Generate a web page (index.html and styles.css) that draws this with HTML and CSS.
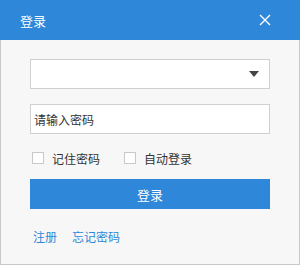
FILE: index.html
```html
<!DOCTYPE html>
<html>
<head>
<meta charset="utf-8">
<link rel="stylesheet" href="styles.css">
</head>
<body>
<div class="win">
  <div class="head">
    <span class="title">登录</span>
    <svg class="close" width="12" height="12" viewBox="0 0 12 12"><path d="M1 1L11 11M11 1L1 11" stroke="#fff" stroke-width="1.4"/></svg>
  </div>
  <div class="body">
    <div class="field select">
      <svg width="10" height="6" viewBox="0 0 10 6"><path d="M0 0H10L5 6Z" fill="#444"/></svg>
    </div>
    <div class="field input">请输入密码</div>
    <div class="checks">
      <label class="chk"><span class="box"></span>记住密码</label>
      <label class="chk"><span class="box"></span>自动登录</label>
    </div>
    <div class="btn">登录</div>
    <div class="links">
      <a>注册</a>
      <a>忘记密码</a>
    </div>
  </div>
</div>
</body>
</html>
```
FILE: styles.css
```css
html, body { margin: 0; padding: 0; }
body {
  width: 300px; height: 265px;
  font-family: "Noto Sans CJK SC", "Noto Sans", sans-serif;
  font-size: 12px; color: #333;
  background: #f7f7f7;
}
.win {
  box-sizing: border-box;
  width: 300px; height: 265px;
  border: 1px solid #c8c8c8;
  border-top: none;
  background: #f7f7f7;
  display: flex; flex-direction: column;
}
.head {
  height: 40px;
  background: #2e87d8;
  margin: 0 -1px;
  display: flex; align-items: center; justify-content: space-between;
  padding: 0 29px 0 20px;
  color: #fff;
}
.title { font-size: 13px; line-height: 1; }
.close { display: block; }
.body { padding: 19px 29px 0 29px; display: flex; flex-direction: column; }
.field {
  box-sizing: border-box;
  height: 30px;
  background: #fff;
  border: 1px solid #d0d0d0;
  display: flex; align-items: center;
}
.select { justify-content: flex-end; padding-right: 10px; }
.input { margin-top: 15px; padding-left: 3px; color: #333; font-size: 12px; }
.checks { display: flex; gap: 24px; margin-top: 16px; height: 16px; align-items: center; padding-left: 2px; }
.chk { display: flex; align-items: center; gap: 8px; }
.box {
  box-sizing: border-box;
  width: 12px; height: 12px;
  background: #fff; border: 1px solid #c8c8c8;
}
.btn {
  margin-top: 13px;
  height: 30px;
  background: #2e87d8;
  color: #fff;
  font-size: 13px;
  display: flex; align-items: center; justify-content: center;
}
.links { display: flex; gap: 15px; margin-top: 19px; padding-left: 3px; }
.links a { color: #2e87d8; }
```
